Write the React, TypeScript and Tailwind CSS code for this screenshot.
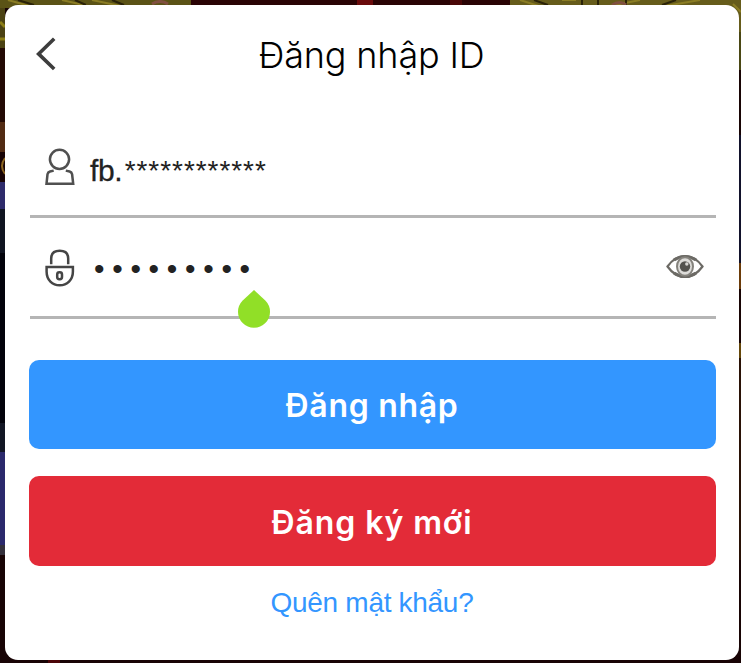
import React from "react";

function Backdrop() {
  return (
    <svg className="absolute inset-0" width="741" height="663" viewBox="0 0 741 663" aria-hidden="true">
      <rect width="741" height="663" fill="#180405" />
      <rect width="192" height="8" fill="#5b5316" />
      <rect x="191" width="320" height="6" fill="#2a0405" />
      <rect x="357" width="16" height="6" fill="#6a0b0c" />
      <rect x="450" width="12" height="6" fill="#4a0707" />
      <rect x="510" width="231" height="34" fill="#665c1b" />
      <g stroke="#8b7d24" strokeWidth="2" fill="none">
        <path d="M8 0L40 9M62 0L96 8M92 0L130 8M520 0L545 8M562 0H576M640 0L610 6M700 0L665 6M733 4L741 12" />
      </g>
      <g stroke="#2a2208" strokeWidth="2" fill="none">
        <path d="M18 0L34 5M75 0L86 5M112 0L124 5M534 0L548 5M582 0V5M598 0V5M626 0V5M676 0L662 5" />
      </g>
      <path d="M152 4Q160 -1 168 4M612 5Q620 0 626 5" stroke="#805040" strokeWidth="3" fill="none" />
      <rect y="8" width="5" height="45" fill="#4b4213" />
      <path d="M0 22L5 27M0 39H5" stroke="#8b7d16" strokeWidth="3" />
      <rect y="48" width="5" height="75" fill="#230a05" />
      <rect y="122" width="5" height="30" fill="#522b13" />
      <path d="M5 158Q-1 166 5 174" stroke="#8b6420" strokeWidth="2" fill="none" />
      <rect y="182" width="5" height="27" fill="#2e2b6b" />
      <rect y="209" width="5" height="44" fill="#101421" />
      <rect y="253" width="5" height="170" fill="#02020b" />
      <rect y="423" width="5" height="30" fill="#121624" />
      <rect y="452" width="5" height="98" fill="#2b296c" />
      <rect y="545" width="5" height="10" fill="#34303b" />
      <rect x="739" y="32" width="2" height="38" fill="#4a4714" />
      <rect x="739" y="135" width="2" height="128" fill="#12122b" />
      <rect x="739" y="263" width="2" height="26" fill="#6b3b09" />
      <rect x="739" y="343" width="2" height="15" fill="#65470a" />
      <rect x="739" y="358" width="2" height="202" fill="#2a1206" />
      <rect x="48" y="660" width="12" height="3" fill="#4c0508" />
    </svg>
  );
}

function BackIcon() {
  return (
    <svg width="20" height="34" viewBox="0 0 20 34" fill="none" stroke="#3d3d3d" strokeWidth="3.6">
      <path d="M18.2 1.8L2.6 16.9L18.2 32" />
    </svg>
  );
}

function UserIcon() {
  return (
    <svg width="30" height="38" viewBox="0 0 30 38" fill="none" stroke="#505050" strokeWidth="2.5">
      <circle cx="14.5" cy="11.3" r="9.6" />
      <path d="M8.7 22.6L5 23.5Q2.9 24.1 2.5 26.3L1.5 35.8H28.2L27.1 26.3Q26.7 24.1 24.6 23.5L20.8 22.6" />
    </svg>
  );
}

function LockIcon() {
  return (
    <svg width="30" height="38" viewBox="0 0 30 38" fill="none" stroke="#454545" strokeWidth="2.5">
      <path d="M6.2 15.2V9.5Q6.2 1.8 14.7 1.8T23.2 9.5V15.2" />
      <path d="M1.6 18H27.9V22.5C27.9 31 22 36.3 14.7 36.3S1.6 31 1.6 22.5Z" />
      <rect x="12.2" y="23.2" width="4.8" height="7" rx="2.2" />
    </svg>
  );
}

function EyeIcon() {
  return (
    <svg width="38" height="25" viewBox="0 0 38 25" fill="none">
      <path d="M1.5 12.5Q9 2 19 2T36.5 12.5Q29 23 19 23T1.5 12.5Z" stroke="#6c6a65" strokeWidth="2.2" />
      <path d="M8 6Q13 2.5 19 2.5T30 6M8 19Q13 22.5 19 22.5T30 19" stroke="#6c6a65" strokeWidth="3.2" />
      <ellipse cx="19" cy="12.5" rx="8" ry="9.3" fill="#dddcd9" stroke="#85837d" strokeWidth="2" />
      <circle cx="19" cy="12.5" r="5.2" fill="#53524e" />
      <circle cx="20.8" cy="10" r="1.7" fill="#d5d4d1" />
    </svg>
  );
}

export default function App() {
  return (
    <main className="relative h-[663px] w-[741px] overflow-hidden pl-[5px] pt-[5px]">
      <Backdrop />
      <section className="relative flex h-[655px] w-[734px] flex-col rounded-[13px] bg-white pl-[23.5px] pr-[23.5px] font-['Liberation_Sans',sans-serif]">
        <header className="grid h-[100px] grid-cols-[20px_1fr_20px] items-center pl-[7.5px] pr-[8.5px]">
          <button className="-mt-[2px]" aria-label="Quay lại"><BackIcon /></button>
          <h1 className="text-center font-['Inter',sans-serif] text-[36px] font-light leading-[44px] tracking-[-0.15px] text-black">Đăng nhập ID</h1>
        </header>
        <div className="ml-[1.5px] flex h-[113px] items-end border-b-[3px] border-[#b5b5b5] pb-[27px] pl-[15px]">
          <span className="mb-[2px]"><UserIcon /></span>
          <span className="ml-[15px] flex h-[34px] items-center text-[30px] leading-[34px] text-[#222]">
            <span className="tracking-[-0.4px] [-webkit-text-stroke:0.3px_#222]">fb.</span>
            <span className="ml-[2.5px] text-[28px] tracking-[0.95px]">************</span>
          </span>
        </div>
        <div className="relative ml-[1.5px] flex h-[101px] items-center border-b-[3px] border-[#b5b5b5] pl-[15px] pr-[12px]">
          <span className="mt-px"><LockIcon /></span>
          <span className="ml-[19px] mt-[4px] grow text-[30px] leading-[34px] tracking-[7.7px] text-[#222]">•••••••••</span>
          <button className="-mt-[2px]" aria-label="Hiện mật khẩu"><EyeIcon /></button>
          <svg className="absolute left-[207.5px] top-[71px]" width="32" height="40" viewBox="0 0 32 40">
            <path d="M16 1L27.3 11.4A16 16 0 1 1 4.7 11.4Z" fill="#91df27" />
          </svg>
        </div>
        <button className="mt-[41px] flex h-[89px] shrink-0 items-center justify-center rounded-[10px] bg-[#3396ff] pt-[3px] font-['Inter',sans-serif] text-[32px] font-semibold leading-10 tracking-[0.7px] text-white">
          <span>Đăng nhập</span>
        </button>
        <button className="mt-[27px] flex h-[89.5px] shrink-0 items-center justify-center rounded-[10px] bg-[#e32b38] pt-[4px] font-['Inter',sans-serif] text-[32px] font-semibold leading-10 tracking-[0.9px] text-white">
          <span>Đăng ký mới</span>
        </button>
        <a className="mt-[21.5px] self-center text-[28px] leading-8 tracking-[-0.3px] text-[#3396ff]">Quên mật khẩu?</a>
      </section>
    </main>
  );
}
